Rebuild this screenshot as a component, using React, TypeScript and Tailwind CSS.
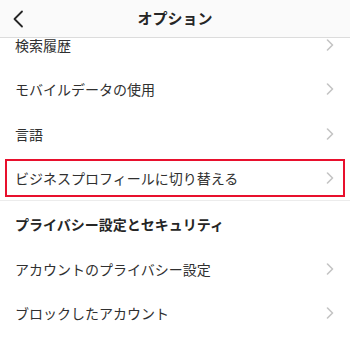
import { ReactNode } from 'react'

function Chevron() {
  return (
    <svg width="8" height="12" viewBox="0 0 8 12" className="shrink-0">
      <path d="M1.5 1 L6.5 6 L1.5 11" fill="none" stroke="#c4c4c4" strokeWidth="1.6" strokeLinecap="round" strokeLinejoin="round" />
    </svg>
  );
}

function Row({ children }: { children: ReactNode }) {
  return (
    <div className="h-[44px] flex items-center justify-between pl-[15px] pr-[16px] text-[14px] text-[#303030]">
      <span>{children}</span>
      <Chevron />
    </div>
  );
}

export default function App() {
  return (
    <div
      className="w-[350px] h-[338px] overflow-hidden bg-white"
      style={{ fontFamily: '"Noto Sans CJK JP", "Noto Sans", sans-serif' }}
    >
      <div className="relative z-10 h-[38px] flex items-center justify-center bg-[#fafafa] border-b border-[#dcdcdc]">
        <svg width="12" height="18" viewBox="0 0 12 18" className="absolute left-[12px] top-[10px]">
          <path d="M10 1.5 L2.5 9 L10 16.5" fill="none" stroke="#262626" strokeWidth="1.8" strokeLinecap="round" strokeLinejoin="round" />
        </svg>
        <span className="text-[15px] font-bold text-[#262626]">オプション</span>
      </div>

      <div className="-mt-[15px]">
        <Row>検索履歴</Row>
        <Row>モバイルデータの使用</Row>
        <div className="mt-[1px]">
          <Row>言語</Row>
        </div>
        <div className="h-[44px] px-[5px] py-[3px]">
          <div className="h-full border-2 border-[#e8102d] flex items-center justify-between pl-[8px] pr-[9px] text-[14px] text-[#303030]">
            <span>ビジネスプロフィールに切り替える</span>
            <Chevron />
          </div>
        </div>
        <div className="h-px bg-[#ececec]" />
        <div className="h-[46px] flex items-center pl-[15px] text-[14px] font-bold text-[#262626]">
          プライバシー設定とセキュリティ
        </div>
        <Row>アカウントのプライバシー設定</Row>
        <Row>ブロックしたアカウント</Row>
      </div>
    </div>
  );
}
